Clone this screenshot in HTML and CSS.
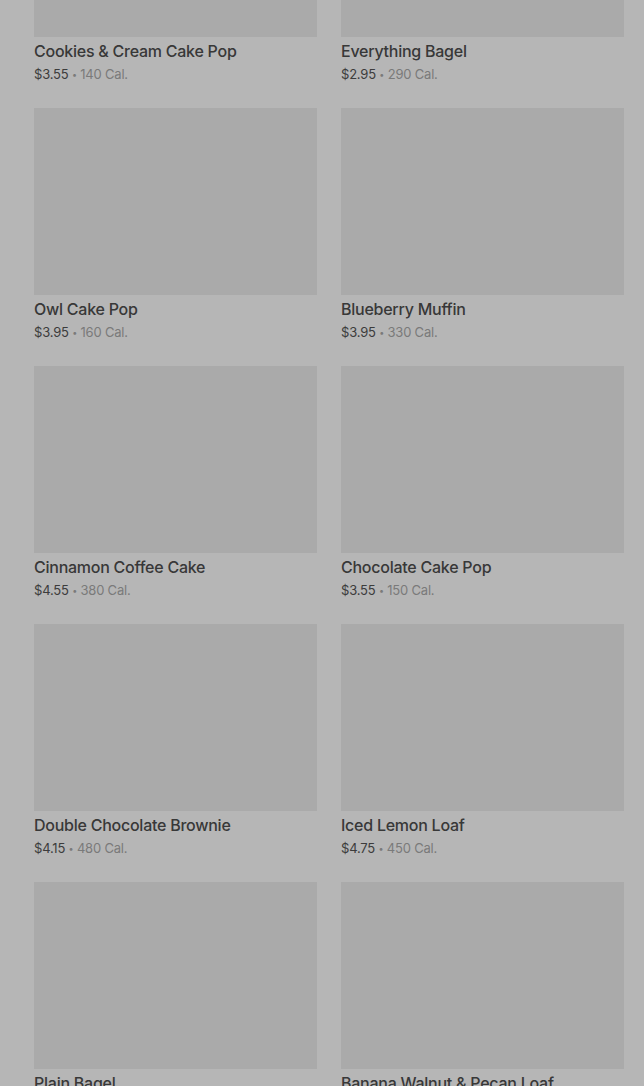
FILE: index.html
```html
<!DOCTYPE html>
<html lang="en">
<head>
  <meta charset="UTF-8" />
  <meta name="viewport" content="width=device-width, initial-scale=1.0" />
  <title>Menu</title>
  <link rel="stylesheet" href="styles.css">
</head>
<body>
  <div class="menu">
    <div class="grid">
      <div class="item">
        <div class="thumb"></div>
        <div class="name">Cookies &amp; Cream Cake Pop</div>
        <div class="meta"><span class="price">$3.55</span> <span class="dot">•</span> 140 Cal.</div>
      </div>
      <div class="item">
        <div class="thumb"></div>
        <div class="name">Everything Bagel</div>
        <div class="meta"><span class="price">$2.95</span> <span class="dot">•</span> 290 Cal.</div>
      </div>
      <div class="item">
        <div class="thumb"></div>
        <div class="name">Owl Cake Pop</div>
        <div class="meta"><span class="price">$3.95</span> <span class="dot">•</span> 160 Cal.</div>
      </div>
      <div class="item">
        <div class="thumb"></div>
        <div class="name">Blueberry Muffin</div>
        <div class="meta"><span class="price">$3.95</span> <span class="dot">•</span> 330 Cal.</div>
      </div>
      <div class="item">
        <div class="thumb"></div>
        <div class="name">Cinnamon Coffee Cake</div>
        <div class="meta"><span class="price">$4.55</span> <span class="dot">•</span> 380 Cal.</div>
      </div>
      <div class="item">
        <div class="thumb"></div>
        <div class="name">Chocolate Cake Pop</div>
        <div class="meta"><span class="price">$3.55</span> <span class="dot">•</span> 150 Cal.</div>
      </div>
      <div class="item">
        <div class="thumb"></div>
        <div class="name">Double Chocolate Brownie</div>
        <div class="meta"><span class="price">$4.15</span> <span class="dot">•</span> 480 Cal.</div>
      </div>
      <div class="item">
        <div class="thumb"></div>
        <div class="name">Iced Lemon Loaf</div>
        <div class="meta"><span class="price">$4.75</span> <span class="dot">•</span> 450 Cal.</div>
      </div>
      <div class="item">
        <div class="thumb"></div>
        <div class="name">Plain Bagel</div>
        <div class="meta"><span class="price">$1.95</span> <span class="dot">•</span> 280 Cal.</div>
      </div>
      <div class="item">
        <div class="thumb"></div>
        <div class="name">Banana Walnut &amp; Pecan Loaf</div>
        <div class="meta"><span class="price">$3.95</span> <span class="dot">•</span> 410 Cal.</div>
      </div>
    </div>
  </div>
</body>
</html>
```

FILE: styles.css
```css
* {
  box-sizing: border-box;
  font-family: 'Inter', 'Liberation Sans', sans-serif;
}
html, body {
  height: 100%;
}
body {
  margin: 0;
  background: #b6b6b6;
  overflow: hidden;
}
.menu {
  padding: 0 20px 0 34px;
}
.grid {
  display: grid;
  grid-template-columns: 1fr 1fr;
  column-gap: 24px;
  row-gap: 23px;
  margin-top: -150px;
}
.thumb {
  height: 187px;
  background: #aaaaaa;
}
.name {
  margin-top: 2px;
  font-size: 16px;
  line-height: 24px;
  font-weight: 500;
  color: #383838;
  letter-spacing: -0.25px;
}
.meta {
  height: 22px;
  font-size: 13px;
  line-height: 22px;
  color: #7a7a7a;
  letter-spacing: -0.2px;
}
.price {
  color: #3c3c3c;
}
.dot {
  font-size: 9px;
  line-height: 1;
  vertical-align: 1px;
}
```
